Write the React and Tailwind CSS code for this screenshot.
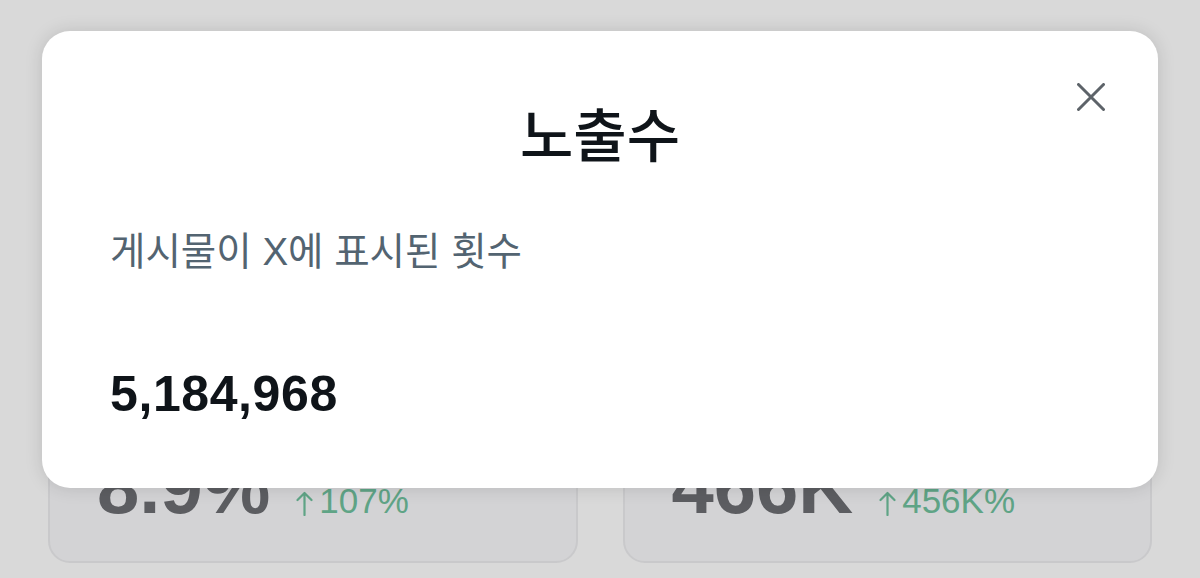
import React from 'react';

const stats = [
  { id: 'rate', value: '8.9%', change: '107%' },
  { id: 'count', value: '466K', change: '456K%' },
];

const CloseIcon = () => (
  <svg width="28" height="28" viewBox="0 0 28 28" fill="none" stroke="currentColor" strokeWidth="3" strokeLinecap="round">
    <path d="M1.5 1.5 26.5 26.5M26.5 1.5 1.5 26.5" />
  </svg>
);

const UpArrow = () => (
  <svg className="inline-block mr-[6px]" width="17" height="25" viewBox="0 0 17 25" fill="none" stroke="currentColor" strokeWidth="2.2" strokeLinecap="round" strokeLinejoin="round">
    <path d="M8.5 24V2M1.5 9 8.5 2l7 7" />
  </svg>
);

export default function App() {
  return (
    <div className="relative w-full h-[578px] overflow-hidden bg-[#d9d9d9] font-['Liberation_Sans','Noto_Sans_CJK_KR',sans-serif]">
      {/* Cards behind the overlay */}
      <div className="flex flex-col justify-end h-full px-12 pb-[15px]">
        <div className="grid grid-cols-2 gap-[45px]">
          {stats.map(stat => (
            <div
              key={stat.id}
              className="h-[180px] flex items-end px-[47px] pb-[36px] rounded-[22px] border-2 border-[#c9c9cb] bg-[#d3d3d5]">
              <div className="flex items-baseline gap-[26px]">
                <span className="text-[76px] leading-none font-bold text-[#5c5d61]">{stat.value}</span>
                <span className="text-[35px] leading-none text-[#5fa486]">
                  <UpArrow />
                  {stat.change}
                </span>
              </div>
            </div>
          ))}
        </div>
      </div>

      {/* Modal */}
      <div className="absolute left-[42px] top-[31px] w-[1116px] h-[457px] rounded-[28px] bg-white shadow-[0_0_18px_rgba(0,0,0,0.13)] flex flex-col px-[68px] pt-[72px]">
        <button className="absolute right-[53px] top-[52px] text-[#5d6369]">
          <CloseIcon />
        </button>
        <h2 className="text-center text-[58px] leading-none font-medium text-[#0f1419] font-['Noto_Sans_CJK_KR',sans-serif]">
          노출수
        </h2>
        <p className="mt-[72px] text-[38.5px] leading-none text-[#536471]">게시물이 X에 표시된 횟수</p>
        <div className="mt-[97px] text-[50px] leading-none font-bold tracking-[0.6px] text-[#0f1419]">5,184,968</div>
      </div>
    </div>
  );
}
